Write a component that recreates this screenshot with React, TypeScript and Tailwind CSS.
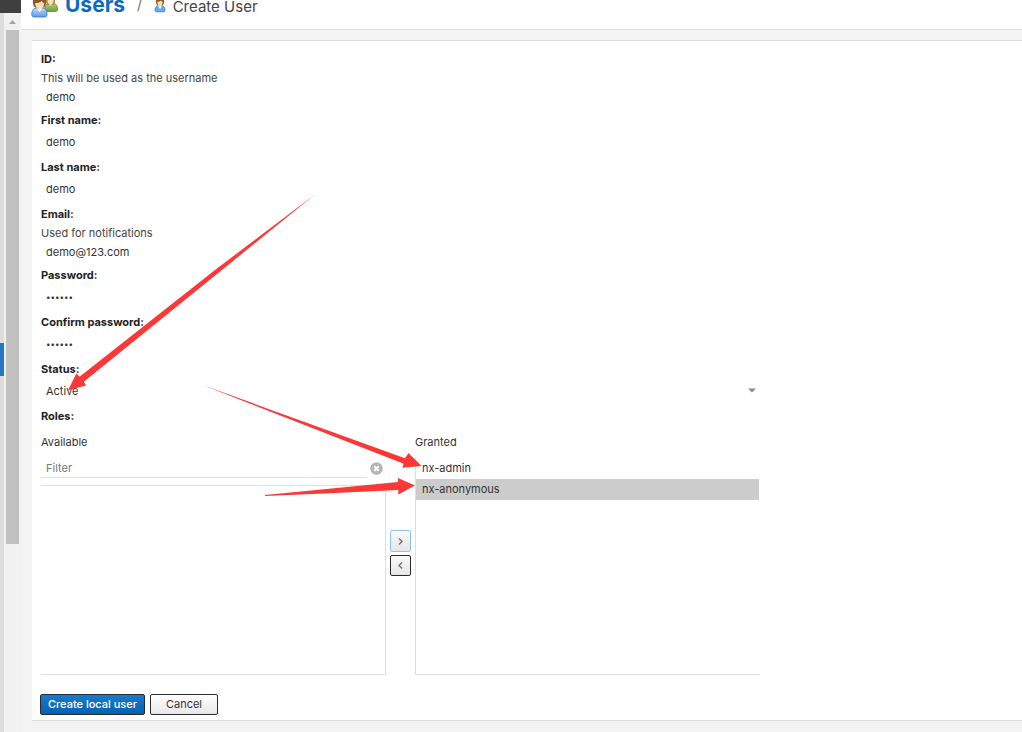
import { useState } from "react";
import type { ReactNode } from "react";

function UsersIcon() {
  return (
    <svg width="28" height="20" viewBox="0 0 28 20" className="shrink-0" aria-hidden="true">
      <defs>
        <linearGradient id="blueShirt" x1="0" y1="0" x2="0" y2="1">
          <stop offset="0" stopColor="#b9dcfb" />
          <stop offset="1" stopColor="#5a9be6" />
        </linearGradient>
        <linearGradient id="greenShirt" x1="0" y1="0" x2="0" y2="1">
          <stop offset="0" stopColor="#b4d373" />
          <stop offset="1" stopColor="#6a9d33" />
        </linearGradient>
      </defs>
      <path d="M14 11.500V7c0-2 2-3.500 4-3.500h4c3 0 4.500 2 4.500 5.500 0 1.500-.5 2.500-2 2.500z" fill="url(#greenShirt)" stroke="#5f8a34" strokeWidth=".8" />
      <path d="M15 0h9c.3 2-.5 4-1.500 5h-6C15.500 4 15 2 15 0z" fill="#b98242" />
      <path d="M16.500 0h6c.2 2-.8 4.500-3 5.500-2-1-3-3.500-3-5.500z" fill="#fbe0ba" />
      <path d="M.8 14.500C.8 10 3 8 6 8h5c3 0 5 2 5 6.500 0 1.500-.7 2.500-2.200 2.500H3C1.500 17 .8 16 .8 14.500z" fill="url(#blueShirt)" stroke="#3f7cc4" strokeWidth=".9" />
      <path d="M5.500 8.500l3 3.300 3-3.300z" fill="#fff" />
      <path d="M2 0h13c.5 3 0 6-2 7.500H4C2 6 1.500 3 2 0z" fill="#8c572b" />
      <path d="M4 3c3 .2 5-.5 6.500-2 1 1.300 2 2 2.800 2.200C13 6.500 11 9.500 8.600 9.500S4.300 6.500 4 3z" fill="#fbdcb4" />
    </svg>
  );
}

function UserIcon() {
  return (
    <svg width="12" height="14" viewBox="0 0 12 14" className="shrink-0" aria-hidden="true">
      <path d="M1 10c0-2.500 1.500-4 3.500-4h3C9.500 6 11 7.500 11 10c0 1.300-.5 1.800-1.500 1.800h-7C1.500 11.800 1 11.300 1 10z" fill="#6aa9ee" stroke="#3a77c2" strokeWidth=".8" />
      <path d="M4 6.300l2 2.700 2-2.700z" fill="#fff" />
      <path d="M2 0h8c.3 2.500-.2 4.500-1.300 5.500H3.300C2.200 4.500 1.700 2.500 2 0z" fill="#8c572b" />
      <path d="M3.300 1.800C5 1.800 6 1.300 7 .5c.5.8 1.200 1.200 1.700 1.300C8.600 4.300 7.500 6.600 6 6.600S3.400 4.300 3.300 1.800z" fill="#fbdcb4" />
    </svg>
  );
}

type FieldProps = {
  id: string;
  label: string;
  value: string;
  help?: string;
};

function FieldShell({
  id,
  label,
  help,
  children,
}: {
  id: string;
  label: string;
  help?: string;
  children: ReactNode;
}) {
  return (
    <div className={help ? "flex flex-col pb-[5px]" : "flex flex-col pb-[3px]"}>
      <label htmlFor={id} className="self-start font-bold leading-[18px] text-[#222]">
        {label}
      </label>
      {help && <p className="leading-5 text-[#444]">{help}</p>}
      {children}
    </div>
  );
}

function Field({ id, label, value, help }: FieldProps) {
  return (
    <FieldShell id={id} label={label} help={help}>
      <input
        id={id}
        type="text"
        defaultValue={value}
        className={
          help
            ? "h-[18px] w-full bg-transparent px-[5px] outline-none"
            : "h-[26px] w-full bg-transparent px-[5px] outline-none"
        }
      />
    </FieldShell>
  );
}

function PasswordField({ id, label, value }: FieldProps) {
  return (
    <FieldShell id={id} label={label}>
      <input
        id={id}
        type="password"
        defaultValue={value}
        className="h-[26px] w-full bg-transparent px-[5px] text-[8px] outline-none"
      />
    </FieldShell>
  );
}

function Chevron({ left }: { left?: boolean }) {
  return (
    <svg width="7" height="9" viewBox="0 0 7 9" aria-hidden="true">
      <path
        d={left ? "M5 1.500L2 4.500l3 3" : "M2 1.500l3 3-3 3"}
        fill="none"
        stroke="#777"
        strokeWidth="1.500"
      />
    </svg>
  );
}

function Rail() {
  return (
    <div className="flex w-[21px] shrink-0 flex-col bg-[#f1f1f1]">
      <div className="h-[13px] bg-[#404040]" />
      <div className="flex flex-1">
        <div className="w-1 bg-[#ddd] pt-[330px]">
          <div className="h-[33px] bg-[#2a75c4]" />
        </div>
        <div className="ml-[2px] w-[13px]">
          <svg width="13" height="17" viewBox="0 0 13 17" aria-hidden="true">
            <path d="M3 11l3.500-4 3.500 4z" fill="#a3a3a3" />
          </svg>
          <div className="h-[514px] bg-[#c1c1c1]" />
        </div>
      </div>
    </div>
  );
}

function Arrows() {
  return (
    <svg
      className="pointer-events-none absolute left-0 top-0"
      width="520"
      height="520"
      viewBox="0 0 520 520"
      fill="#fb3838"
      aria-hidden="true"
    >
      <path d="M315.500 194L215 270 79.500 376.700 76.500 373.300 68 390.300 86 385.500 83.800 381.700 217 274z" />
      <path d="M202.500 385L405 458.300 408.500 453 421.500 466 402.300 467.800 403.700 463.700 325 433z" />
      <path d="M265 495L398 482 398 478 415 485.500 398.300 494.500 398.300 490 330 493.300 265 496z" />
    </svg>
  );
}

const roles = ["nx-admin", "nx-anonymous"];

export default function App() {
  const [selected, setSelected] = useState("nx-anonymous");
  return (
    <div className="relative flex min-h-screen overflow-hidden bg-[#f3f3f3] font-['Inter',sans-serif] text-[11px] text-[#333]">
      <Rail />
      <main className="flex min-w-0 flex-1 flex-col">
        <header className="flex h-[30px] items-start border-b border-[#dedede] bg-white pl-[10px]">
          <UsersIcon />
          <h1 className="ml-[6px] text-[21px] font-bold leading-[10px] text-[#0a6cc0]">
            Users
          </h1>
          <span className="ml-3 text-[13px] leading-[10px] text-[#666]">/</span>
          <span className="ml-3">
            <UserIcon />
          </span>
          <h2 className="ml-[7px] text-[15px] leading-[14px] text-[#444]">Create User</h2>
        </header>

        <form
          className="ml-[11px] mt-[10px] border-y border-[#dedede] bg-white pb-[5px] pl-2 pt-[9px]"
          onSubmit={(e) => e.preventDefault()}
        >
          <div className="w-full max-w-[720px] pl-px">
            <Field id="uid" label="ID:" value="demo" help="This will be used as the username" />
            <Field id="first" label="First name:" value="demo" />
            <Field id="last" label="Last name:" value="demo" />
            <Field
              id="email"
              label="Email:"
              value="demo@123.com"
              help="Used for notifications"
            />
            <PasswordField id="password" label="Password:" value="secret" />
            <PasswordField id="confirm" label="Confirm password:" value="secret" />
            <FieldShell id="status" label="Status:">
              <div className="relative">
                <select
                  id="status"
                  defaultValue="Active"
                  className="h-[26px] w-full appearance-none bg-transparent px-[5px] outline-none"
                >
                  <option>Active</option>
                  <option>Disabled</option>
                </select>
                <svg
                  className="pointer-events-none absolute right-1 top-[10px]"
                  width="8"
                  height="5"
                  viewBox="0 0 8 5"
                  aria-hidden="true"
                >
                  <path d="M0 .5h8l-4 4z" fill="#8c8c8c" />
                </svg>
              </div>
            </FieldShell>

            <fieldset>
              <legend className="font-bold leading-[18px] text-[#222]">Roles:</legend>
              <div className="flex pt-2">
                <div className="flex min-w-0 flex-1 flex-col">
                  <label htmlFor="filter" className="leading-[18px]">
                    Available
                  </label>
                  <div className="mt-2 flex h-[19px] items-center">
                    <input
                      id="filter"
                      placeholder="Filter"
                      className="h-full min-w-0 flex-1 border-b border-[#dedede] bg-transparent px-[5px] outline-none placeholder:text-[#777]"
                    />
                    <button type="button" aria-label="Clear filter" className="ml-[2px] mr-[2px] w-[15px]">
                      <svg width="15" height="15" viewBox="0 0 15 15" aria-hidden="true">
                        <circle cx="7.500" cy="7.500" r="6.300" fill="#b5b5b5" />
                        <path
                          d="M5.300 5.300l4.400 4.400M9.700 5.300l-4.400 4.400"
                          stroke="#fff"
                          strokeWidth="2"
                        />
                      </svg>
                    </button>
                  </div>
                  <ul
                    aria-label="Available roles"
                    className="mt-[7px] h-[190px] border-y border-r border-[#dedede]"
                  />
                </div>

                <div className="flex w-[29px] flex-col items-center justify-center gap-[3px] pb-[2px]">
                  <button
                    type="button"
                    aria-label="Grant role"
                    className="flex h-[22px] w-[21px] items-center justify-center rounded-[2px] border border-[#8cc4f0] bg-linear-to-b from-[#fafafa] to-[#e6e6e6]"
                  >
                    <Chevron />
                  </button>
                  <button
                    type="button"
                    aria-label="Revoke role"
                    className="flex h-[21px] w-[21px] items-center justify-center rounded-[2px] border border-[#2b2b2b] bg-linear-to-b from-[#fafafa] to-[#e6e6e6]"
                  >
                    <Chevron left />
                  </button>
                </div>

                <div className="flex min-w-0 flex-1 flex-col">
                  <span id="granted" className="leading-[18px]">
                    Granted
                  </span>
                  <ul
                    aria-labelledby="granted"
                    className="mt-[7px] flex-1 border-b border-l border-[#dedede] pr-px"
                  >
                    {roles.map((role) => (
                      <li key={role}>
                        <button
                          type="button"
                          onClick={() => setSelected(role)}
                          className={
                            role === selected
                              ? "block h-[21px] w-full bg-[#ccc] px-[6px] text-left"
                              : "block h-[21px] w-full px-[6px] text-left"
                          }
                        >
                          {role}
                        </button>
                      </li>
                    ))}
                  </ul>
                </div>
              </div>
            </fieldset>
          </div>

          <div className="flex gap-[5px] pt-[19px]">
            <button
              type="submit"
              className="h-[21px] w-[105px] rounded-[2px] border border-[#2b2b2b] bg-linear-to-b from-[#1a7bcb] to-[#0560b0] font-medium text-white"
            >
              Create local user
            </button>
            <button
              type="button"
              className="h-[21px] w-[68px] rounded-[2px] border border-[#2b2b2b] bg-linear-to-b from-white to-[#e8e8e8]"
            >
              Cancel
            </button>
          </div>
        </form>
      </main>
      <Arrows />
    </div>
  );
}
